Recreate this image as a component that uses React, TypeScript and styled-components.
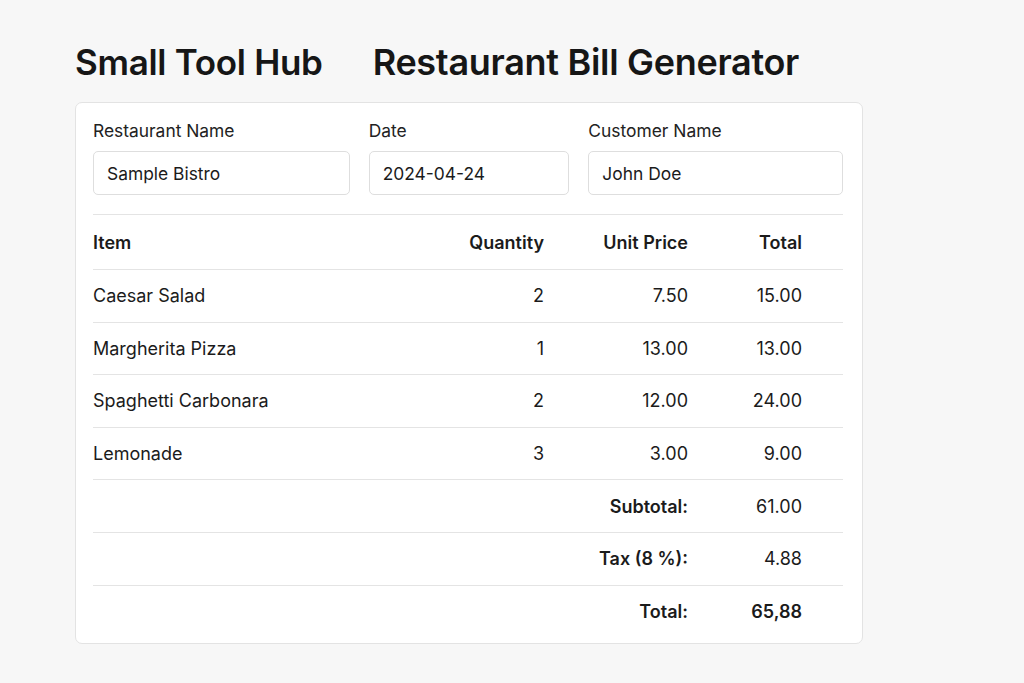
import React from 'react';
import styled, { createGlobalStyle } from 'styled-components';

const GlobalStyle = createGlobalStyle`
    * {
        box-sizing: border-box;
    }
    body {
        margin: 0;
        background: #f7f7f7;
        font-family: Inter, 'Noto Sans', 'Liberation Sans', sans-serif;
        color: #1b1b1b;
    }
`;

const items = [
    { name: 'Caesar Salad', qty: 2, price: '7.50', total: '15.00' },
    { name: 'Margherita Pizza', qty: 1, price: '13.00', total: '13.00' },
    { name: 'Spaghetti Carbonara', qty: 2, price: '12.00', total: '24.00' },
    { name: 'Lemonade', qty: 3, price: '3.00', total: '9.00' },
];

const summary = [
    { label: 'Subtotal:', value: '61.00' },
    { label: 'Tax (8 %):', value: '4.88' },
    { label: 'Total:', value: '65,88', strong: true },
];

export default function App() {
    return (
        <>
            <GlobalStyle />
            <Page>
                <Header>
                    <Brand>Small Tool Hub</Brand>
                    <Title>Restaurant Bill Generator</Title>
                </Header>

                <Card>
                    <Fields>
                        <Field $width={257}>
                            <Label>Restaurant Name</Label>
                            <Input defaultValue="Sample Bistro" />
                        </Field>
                        <Field $width={201}>
                            <Label>Date</Label>
                            <Input defaultValue="2024-04-24" />
                        </Field>
                        <Field $width={255}>
                            <Label>Customer Name</Label>
                            <Input defaultValue="John Doe" />
                        </Field>
                    </Fields>

                    <Table>
                        <Row $head>
                            <Cell>Item</Cell>
                            <Cell $right>Quantity</Cell>
                            <Cell $right>Unit Price</Cell>
                            <Cell $right>Total</Cell>
                        </Row>
                        {items.map((it) => (
                            <Row key={it.name}>
                                <Cell>{it.name}</Cell>
                                <Cell $right>{it.qty}</Cell>
                                <Cell $right>{it.price}</Cell>
                                <Cell $right>{it.total}</Cell>
                            </Row>
                        ))}
                        {summary.map((s) => (
                            <Row key={s.label}>
                                <Cell />
                                <Cell />
                                <Cell $right $bold>{s.label}</Cell>
                                <Cell $right $bold={s.strong}>{s.value}</Cell>
                            </Row>
                        ))}
                    </Table>
                </Card>
            </Page>
        </>
    );
}

/* Styles */
const Page = styled.div`
    padding: 40px 0 40px 75px;
`;
const Header = styled.header`
    display: flex;
    align-items: baseline;
    gap: 50px;
    margin-bottom: 18px;
`;
const Brand = styled.div`
    font-size: 35px;
    font-weight: 600;
    letter-spacing: -0.3px;
    color: #161616;
`;
const Title = styled.h1`
    margin: 0;
    font-size: 36px;
    font-weight: 600;
    letter-spacing: -0.3px;
    color: #161616;
`;
const Card = styled.section`
    width: 788px;
    background: #fff;
    border: 1px solid #e3e3e3;
    border-radius: 7px;
    padding: 17px 19px 5px 17px;
`;
const Fields = styled.div`
    display: flex;
    gap: 19px;
    padding-bottom: 19px;
    border-bottom: 1px solid #e4e4e4;
`;
const Field = styled.label<{ $width: number }>`
    display: flex;
    flex-direction: column;
    gap: 10px;
    width: ${(p) => p.$width}px;
`;
const Label = styled.span`
    font-size: 17.4px;
    color: #222;
`;
const Input = styled.input`
    height: 44px;
    width: 100%;
    padding: 0 13px;
    border: 1px solid #dedede;
    border-radius: 5px;
    font-family: inherit;
    font-size: 17.4px;
    color: #1b1b1b;
    background: #fff;
    outline: none;
`;
const Table = styled.div`
    display: flex;
    flex-direction: column;
`;
const Row = styled.div<{ $head?: boolean }>`
    display: grid;
    grid-template-columns: 1fr 110px 144px 114px 41px;
    align-items: center;
    height: ${(p) => (p.$head ? 55 : 52.6)}px;
    border-bottom: 1px solid #e4e4e4;
    font-size: 18px;
    font-weight: ${(p) => (p.$head ? 600 : 400)};

    &:last-child {
        border-bottom: none;
    }
`;
const Cell = styled.div<{ $right?: boolean; $bold?: boolean }>`
    text-align: ${(p) => (p.$right ? 'right' : 'left')};
    font-weight: ${(p) => (p.$bold ? 600 : 'inherit')};
`;
